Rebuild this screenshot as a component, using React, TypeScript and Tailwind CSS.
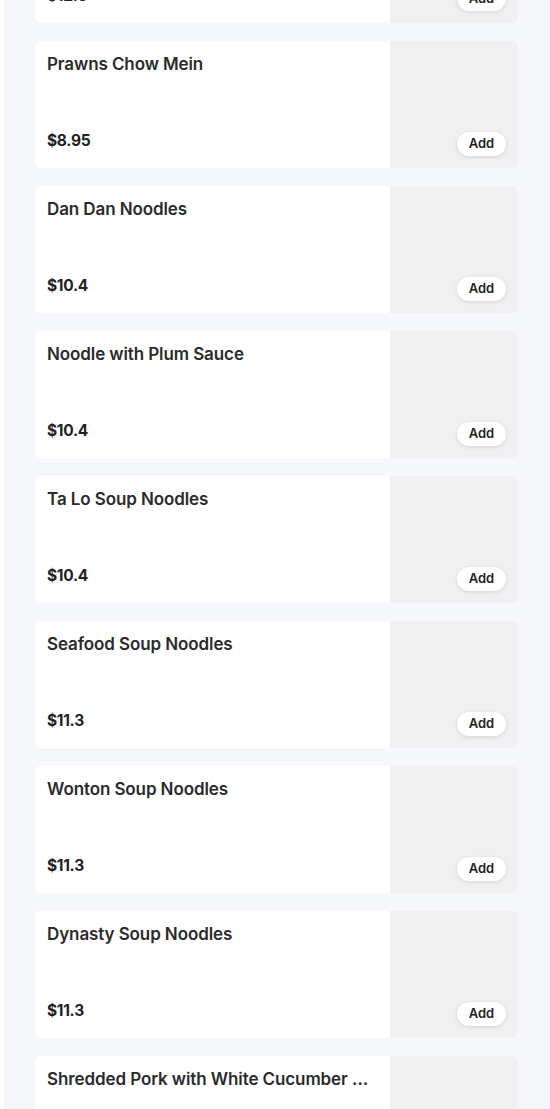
import React from "react";

const items = [
  { name: "Chicken Chow Mein", price: "$12.5" },
  { name: "Prawns Chow Mein", price: "$8.95" },
  { name: "Dan Dan Noodles", price: "$10.4" },
  { name: "Noodle with Plum Sauce", price: "$10.4" },
  { name: "Ta Lo Soup Noodles", price: "$10.4" },
  { name: "Seafood Soup Noodles", price: "$11.3" },
  { name: "Wonton Soup Noodles", price: "$11.3" },
  { name: "Dynasty Soup Noodles", price: "$11.3" },
  { name: "Shredded Pork with White Cucumber Soup Noodles", price: "$11.3" },
];

export default function App() {
  return (
    <div
      className="w-[550px] h-[1109px] overflow-hidden bg-white pl-[4px]"
      style={{ fontFamily: "Inter, 'Noto Sans', sans-serif" }}
    >
      <div className="h-full bg-[#f6f7fa] pl-[31px] pr-[32px] flex flex-col overflow-hidden">
        <div className="flex flex-col gap-[18px] mt-[-104px] shrink-0">
          {items.map((it) => (
            <div key={it.name} className="flex h-[127px] rounded-[6px] overflow-hidden">
              <div className="flex-1 min-w-0 bg-white flex flex-col justify-between pl-[12px] pr-[14px] pt-[11px] pb-[15px]">
                <div className="text-[17px] leading-[24px] font-semibold text-[#2b2b2b] truncate tracking-[-0.1px]">
                  {it.name}
                </div>
                <div className="text-[15.5px] leading-[24px] font-bold text-[#222] tracking-[-0.3px]">{it.price}</div>
              </div>
              <div className="w-[128px] bg-[#f0f0f0] flex items-end justify-end pr-[12px] pb-[12px]">
                <div className="w-[49px] h-[24px] rounded-full bg-white shadow-[0_1px_4px_rgba(0,0,0,0.12)] flex items-center justify-center text-[13px] font-semibold text-[#222]">
                  Add
                </div>
              </div>
            </div>
          ))}
        </div>
      </div>
    </div>
  );
}
